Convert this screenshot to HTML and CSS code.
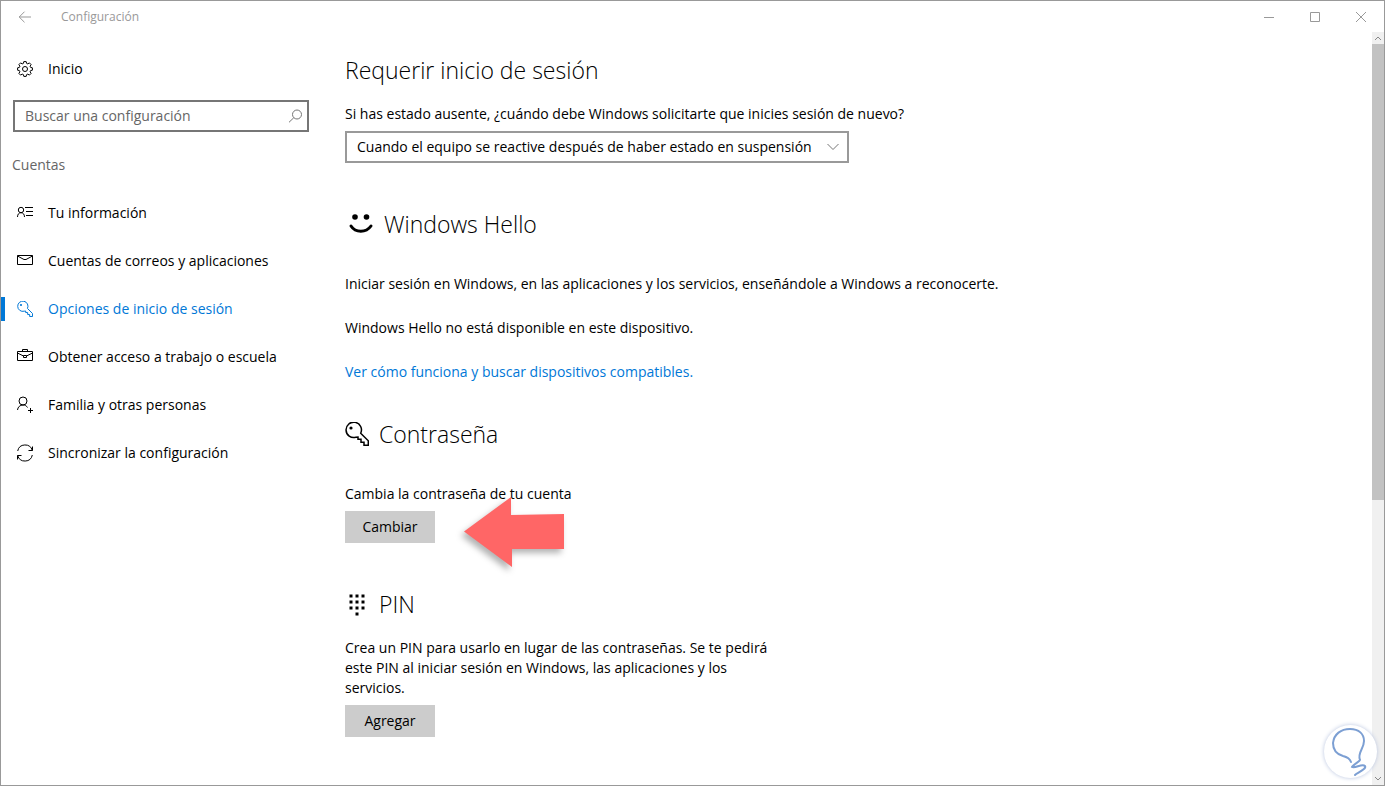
FILE: index.html
```html
<!DOCTYPE html>
<html lang="es">
<head>
    <meta charset="UTF-8">
    <meta name="viewport" content="width=device-width, initial-scale=1.0">
    <title>Configuración</title>
    <link rel="stylesheet" href="styles.css">
</head>
<body>

    <!-- Key icon, used in the menu and in the password section -->
    <svg class="defs" width="0" height="0" aria-hidden="true">
        <symbol id="key" viewBox="0 0 24 24">
            <path d="M15.7 11.2 23.3 18.8v4.5H19v-3h-3v-3h-3V15l-2.200.3A7.700 7.700 0 1 1 15.700 11.200z"/>
            <circle class="dot" cx="6" cy="6" r="1.6"/>
        </symbol>
    </svg>

    <div class="window">
        <!-- Title bar -->
        <header class="title-bar">
            <button class="back" aria-label="Atrás">
                <svg width="14" height="12" viewBox="0 0 14 12"><path d="M13 6H1M6.5.7 1.2 6l5.3 5.3"/></svg>
            </button>
            <span class="title">Configuración</span>
            <button class="control" aria-label="Minimizar">
                <svg width="10" height="10" viewBox="0 0 10 10"><path d="M0 5.5h10"/></svg>
            </button>
            <button class="control" aria-label="Maximizar">
                <svg width="10" height="10" viewBox="0 0 10 10"><path d="M.5.5h9v9h-9z"/></svg>
            </button>
            <button class="control" aria-label="Cerrar">
                <svg width="10" height="10" viewBox="0 0 10 10"><path d="m0 0 10 10M10 0 0 10"/></svg>
            </button>
        </header>

        <div class="body">
            <!-- Sidebar -->
            <aside class="sidebar">
                <a class="item" href="#">
                    <svg width="16" height="16" viewBox="0 0 16 16"><path d="M6.8.6h2.4l.4 1.800 1.200.5 1.600-1 1.700 1.700-1 1.600.5 1.200 1.800.4v2.400l-1.800.4-.5 1.200 1 1.600-1.700 1.700-1.600-1-1.200.5-.4 1.800H6.800l-.4-1.800-1.200-.5-1.600 1-1.700-1.700 1-1.600-.5-1.200L.6 9.200V6.800l1.800-.4.5-1.200-1-1.600 1.700-1.700 1.600 1 1.200-.5z"/><circle cx="8" cy="8" r="2.5"/></svg>
                    Inicio
                </a>
                <div class="search">
                    <input type="text" placeholder="Buscar una configuración" aria-label="Buscar una configuración">
                    <svg width="14" height="14" viewBox="0 0 14 14"><circle cx="9" cy="5.500" r="4.500"/><path d="M5.800 8.700 1 13.300"/></svg>
                </div>
                <h1 class="group">Cuentas</h1>
                <nav>
                    <a class="item" href="#">
                        <svg width="16" height="16" viewBox="0 0 16 16"><circle cx="4" cy="5" r="2.700"/><path d="M.5 12c0-2.700 1.400-4.300 3.500-4.300S7.500 9.300 7.500 12M8 2.500h8M9 6.500h7M9 10.500h7"/></svg>
                        Tu información
                    </a>
                    <a class="item" href="#">
                        <svg width="16" height="16" viewBox="0 0 16 16"><path d="M.5 2.500h15v9H.5zM.5 3 7 6.500h2L15.500 3"/></svg>
                        Cuentas de correos y aplicaciones
                    </a>
                    <a class="item active" href="#">
                        <svg class="key" width="16" height="16"><use href="#key"/></svg>
                        Opciones de inicio de sesión
                    </a>
                    <a class="item" href="#">
                        <svg width="16" height="16" viewBox="0 0 16 16"><path d="M.5 2.500h15v9H.5zM5.500 2.500v-2h5v2M.5 4l6 3M15.500 4l-6 3M6.500 6.500h3v2h-3z"/></svg>
                        Obtener acceso a trabajo o escuela
                    </a>
                    <a class="item" href="#">
                        <svg width="16" height="16" viewBox="0 0 16 16"><circle cx="6" cy="4" r="4"/><path d="M.5 13c.3-3 2.500-5 5.500-5 2 0 3.500.8 4.500 2.500M13.500 11v5M11 13.500h5"/></svg>
                        Familia y otras personas
                    </a>
                    <a class="item" href="#">
                        <svg width="16" height="16" viewBox="0 0 16 16"><path d="M.7 6a7.500 7.500 0 0 1 14.600-.5M15.300 10a7.500 7.500 0 0 1-14.600.5M15.500 1.500v4h-4M.5 14.500v-4h4"/></svg>
                        Sincronizar la configuración
                    </a>
                </nav>
            </aside>

            <!-- Sign-in options -->
            <main class="content">
                <section>
                    <h2>Requerir inicio de sesión</h2>
                    <label for="require">Si has estado ausente, ¿cuándo debe Windows solicitarte que inicies sesión de nuevo?</label>
                    <div class="select">
                        <select id="require">
                            <option>Cuando el equipo se reactive después de haber estado en suspensión</option>
                        </select>
                        <svg width="12" height="8" viewBox="0 0 12 8"><path d="m.5 1 5.500 5.500L11.500 1"/></svg>
                    </div>
                </section>

                <section class="hello">
                    <h2>
                        <svg class="smile" width="32" height="24" viewBox="0 0 32 24"><circle class="dot" cx="10" cy="5" r="2.800"/><circle class="dot" cx="21.500" cy="5" r="2.800"/><path d="M6 14c4.500 7 15 7 20 0"/></svg>
                        Windows Hello
                    </h2>
                    <p>Iniciar sesión en Windows, en las aplicaciones y los servicios, enseñándole a Windows a reconocerte.</p>
                    <p>Windows Hello no está disponible en este dispositivo.</p>
                    <a class="link" href="#">Ver cómo funciona y buscar dispositivos compatibles.</a>
                </section>

                <section class="password">
                    <h2>
                        <svg class="key" width="24" height="24"><use href="#key"/></svg>
                        Contraseña
                    </h2>
                    <p>Cambia la contraseña de tu cuenta</p>
                    <button class="button">Cambiar</button>
                    <svg class="arrow" width="102" height="72" viewBox="0 0 102 72"><path d="M0 34.500 47 0v18l53-1v35H48v18z"/></svg>
                </section>

                <section class="pin">
                    <h2>
                        <svg width="24" height="24" viewBox="0 0 24 24"><path d="M4 2h4v4H4zM10 2h4v4h-4zM16 2h4v4h-4zM4 8h4v4H4zM10 8h4v4h-4zM16 8h4v4h-4zM4 14h4v4H4zM10 14h4v4h-4zM16 14h4v4h-4zM10 20h4v4h-4z"/></svg>
                        PIN
                    </h2>
                    <p>Crea un PIN para usarlo en lugar de las contraseñas. Se te pedirá este PIN al iniciar sesión en Windows, las aplicaciones y los servicios.</p>
                    <button class="button">Agregar</button>
                </section>
            </main>

            <!-- Scrollbar -->
            <div class="scrollbar">
                <svg width="8" height="12" viewBox="0 0 8 12"><path d="m1 8 3-3 3 3"/></svg>
                <div class="track"><div class="thumb"></div></div>
                <svg width="8" height="12" viewBox="0 0 8 12"><path d="m1 4 3 3 3-3"/></svg>
            </div>
        </div>
    </div>

    <!-- Watermark -->
    <div class="watermark">
        <svg width="54" height="54" viewBox="0 0 54 54"><path d="M27 37c-1-3-4-5-8-6C12 29 9 24 9 18 10 9 17 4 26 4c9 0 14 5 14 12 0 8-7 12-4 19 0 1-7 5-8 7 3 2 10-4 13-1 2 3-8 7-10 9"/></svg>
    </div>

</body>
</html>
```
FILE: styles.css
```css
* {
    margin: 0;
    padding: 0;
    box-sizing: border-box;
}

body {
    font-family: 'Open Sans', 'Noto Sans', sans-serif;
    font-size: 14px;
    line-height: 20px;
    color: #000;
    background-color: #fff;
}

svg {
    flex: none;
    fill: none;
    stroke: currentColor;
    overflow: visible;
}

.dot {
    fill: currentColor;
    stroke: none;
}

.defs {
    position: absolute;
}

button,
input,
select {
    font: inherit;
    color: inherit;
    border: none;
    border-radius: 0;
    background: none;
}

a {
    color: inherit;
    text-decoration: none;
}

.window {
    display: flex;
    flex-direction: column;
    min-height: 100vh;
    border: 1px solid #999;
}

/* Title bar */
.title-bar {
    display: flex;
    height: 31px;
    align-items: center;
    color: #999;
    font-size: 12px;
}

.back {
    display: flex;
    width: 48px;
    height: 31px;
    align-items: center;
    justify-content: center;
}

.title {
    flex: 1;
    padding-left: 12px;
}

.control {
    display: flex;
    width: 46px;
    height: 30px;
    align-items: center;
    justify-content: center;
}

.body {
    display: flex;
    flex: 1;
}

/* Sidebar */
.sidebar {
    width: 344px;
    flex: none;
    padding-top: 13px;
}

.item {
    display: flex;
    height: 48px;
    align-items: center;
    gap: 15px;
    padding-left: 16px;
}

.item.active {
    position: relative;
    color: #0078d7;
}

.item.active::before {
    content: '';
    position: absolute;
    left: 0;
    width: 4px;
    height: 24px;
    background-color: #0078d7;
}

.search {
    display: flex;
    width: 296px;
    height: 32px;
    align-items: center;
    margin: 7px 12px 9px;
    padding: 0 5px 0 10px;
    border: 2px solid #767676;
    color: #767676;
}

.search input {
    flex: 1;
    min-width: 0;
    outline: none;
}

.search input::placeholder {
    color: #666;
}

.group {
    height: 48px;
    padding-left: 11px;
    font-size: 14px;
    font-weight: 400;
    line-height: 48px;
    color: #666;
}

/* Content */
.content {
    flex: 1;
    padding-top: 22px;
}

section {
    position: relative;
    margin-bottom: 45px;
}

h2 {
    display: flex;
    align-items: center;
    gap: 10px;
    margin-bottom: 18px;
    font-size: 23px;
    font-weight: 300;
    line-height: 32px;
}

label,
.link {
    display: block;
}

.select {
    display: flex;
    width: 504px;
    max-width: 100%;
    align-items: center;
    margin-top: 7px;
    border: 2px solid #999;
}

.select select {
    width: 100%;
    height: 28px;
    padding: 0 28px 0 10px;
    appearance: none;
    outline: none;
}

.select svg {
    margin-left: -20px;
    color: #767676;
    pointer-events: none;
}

.hello {
    margin-bottom: 36px;
}

.hello h2,
.password h2 {
    margin-bottom: 34px;
}

.hello h2 {
    gap: 7px;
}

.hello p {
    margin-bottom: 24px;
}

.smile {
    stroke-width: 3;
    stroke-linecap: round;
}

.key {
    stroke-width: 1.5;
}

.link {
    color: #0078d7;
}

.button {
    display: block;
    width: 90px;
    height: 32px;
    margin-top: 7px;
    background-color: #ccc;
}

.pin svg {
    fill: #000;
    stroke: #fff;
}

.pin p {
    max-width: 440px;
}

/* Arrow that points at the change button */
.arrow {
    position: absolute;
    left: 119px;
    bottom: -26px;
    fill: #f66;
    stroke: none;
    filter: drop-shadow(-3px 4px 3px rgba(0, 0, 0, 0.3));
}

/* Scrollbar */
.scrollbar {
    display: flex;
    width: 12px;
    flex-direction: column;
    align-items: center;
    color: #888;
    background-color: #f0f0f0;
}

.track {
    flex: 1;
    width: 100%;
}

.thumb {
    height: 62.5%;
    background-color: #c2c2c2;
}

.watermark {
    position: fixed;
    right: 8px;
    bottom: 8px;
    width: 53px;
    height: 53px;
    border-radius: 50%;
    background-color: #fff;
    box-shadow: 0 0 4px #b8c4df;
    color: #7c9fd3;
}

.watermark svg {
    stroke-width: 2;
    stroke-linecap: round;
}
```
